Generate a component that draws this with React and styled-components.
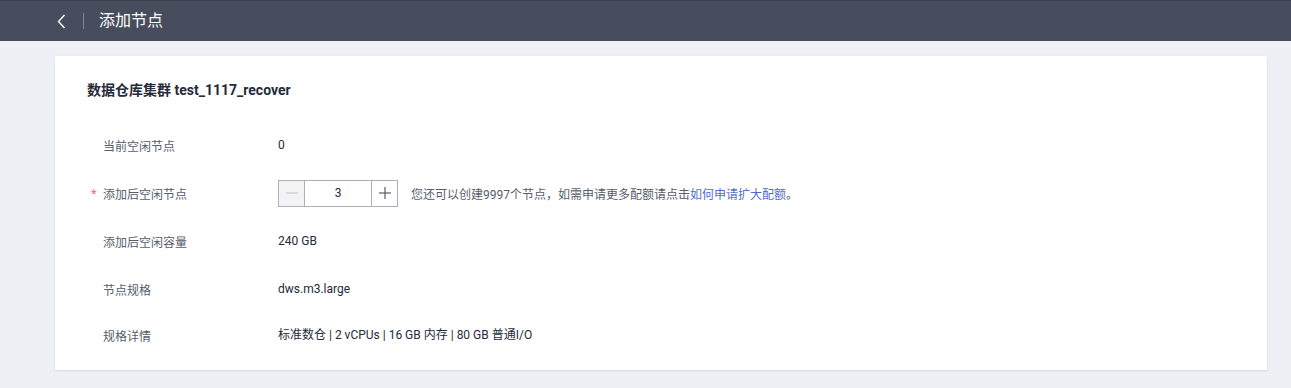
import React from 'react';
import styled, { createGlobalStyle } from 'styled-components';

const GlobalStyle = createGlobalStyle`
  html, body {
    margin: 0;
    padding: 0;
    background: #eef0f5;
    font-family: Roboto, "Noto Sans CJK SC", sans-serif;
  }
`;

const Header = styled.header`
  height: 41px;
  background: #474d5d;
  border-top: 1px solid #393f52;
  display: flex;
  align-items: center;
  padding-left: 57px;
  box-sizing: border-box;
`;

const BackButton = styled.button`
  border: 0;
  background: none;
  padding: 0;
  width: 12px;
  height: 16px;
  display: flex;
  align-items: center;
  cursor: pointer;
`;

const Divider = styled.span`
  width: 1px;
  height: 16px;
  background: #80848f;
  margin: 0 15px 0 14px;
`;

const PageTitle = styled.h1`
  margin: 0;
  font-size: 16px;
  font-weight: 400;
  color: #ffffff;
  line-height: 20px;
`;

const Content = styled.main`
  padding: 15px 24px 18px 55px;
`;

const Card = styled.section`
  background: #ffffff;
  box-shadow: 0 1px 2px rgba(37, 43, 58, 0.12);
  padding: 24px 32px 23px;
`;

const CardTitle = styled.h2`
  margin: 0 0 31px;
  font-size: 14px;
  font-weight: 700;
  color: #252b3a;
  line-height: 20px;
`;

const Rows = styled.div`
  display: flex;
  flex-direction: column;
  gap: 20px;
`;

const Row = styled.div`
  display: flex;
  align-items: center;
  min-height: 28px;
  font-size: 12px;
  margin-top: ${p => p.$pull || 0}px;
`;

const Label = styled.div`
  width: 191px;
  padding-left: 16px;
  box-sizing: border-box;
  color: #575d6c;
  display: flex;
  align-items: center;
  transform: translateY(${p => p.$shift || 0}px);
`;

const Required = styled.span`
  width: 12px;
  margin-left: -12px;
  color: #f66f6a;
  font-size: 13px;
`;

const Value = styled.div`
  color: #252b3a;
`;

const Stepper = styled.div`
  display: flex;
  height: 27px;
  border: 1px solid #adb0b8;
  box-sizing: border-box;
  width: 120px;
`;

const StepButton = styled.button`
  width: 26px;
  border: 0;
  padding: 0;
  background: ${p => (p.disabled ? '#f3f3f5' : '#ffffff')};
  display: flex;
  align-items: center;
  justify-content: center;
  cursor: ${p => (p.disabled ? 'not-allowed' : 'pointer')};
`;

const StepInput = styled.input`
  width: 66px;
  border: 0;
  border-left: 1px solid #adb0b8;
  border-right: 1px solid #adb0b8;
  text-align: center;
  font: 12px Roboto, "Noto Sans CJK SC", sans-serif;
  color: #252b3a;
  padding: 0;
  outline: none;
`;

const Hint = styled.span`
  margin-left: 13px;
  color: #575d6c;
`;

const HintLink = styled.a`
  color: #526ecc;
  text-decoration: none;
`;

const Sign = ({ plus, color }) => (
  <svg width="14" height="14" viewBox="0 0 14 14">
    <line x1="1" y1="7" x2="13" y2="7" stroke={color} strokeWidth="1.2" />
    {plus && <line x1="7" y1="1" x2="7" y2="13" stroke={color} strokeWidth="1.2" />}
  </svg>
);

const info = [
  { label: '添加后空闲容量', value: '240 GB' },
  { label: '节点规格', value: 'dws.m3.large' },
  { label: '规格详情', value: '标准数仓 | 2 vCPUs | 16 GB 内存 | 80 GB 普通I/O', shift: 2, pull: -4 },
];

export default function App() {
  return (
    <>
      <GlobalStyle />
      <Header>
        <BackButton aria-label="back">
          <svg width="9" height="15" viewBox="0 0 9 15">
            <path d="M7.5 1 L1.5 7.5 L7.5 14" fill="none" stroke="#ffffff" strokeWidth="1.4" />
          </svg>
        </BackButton>
        <Divider />
        <PageTitle>添加节点</PageTitle>
      </Header>
      <Content>
        <Card>
          <CardTitle>数据仓库集群 test_1117_recover</CardTitle>
          <Rows>
            <Row>
              <Label>当前空闲节点</Label>
              <Value>0</Value>
            </Row>
            <Row>
              <Label>
                <Required>*</Required>添加后空闲节点
              </Label>
              <Stepper>
                <StepButton disabled>
                  <Sign color="#c8cad0" />
                </StepButton>
                <StepInput defaultValue="3" />
                <StepButton>
                  <Sign plus color="#575d6c" />
                </StepButton>
              </Stepper>
              <Hint>
                您还可以创建9997个节点，如需申请更多配额请点击
                <HintLink href="#">如何申请扩大配额</HintLink>。
              </Hint>
            </Row>
            {info.map(item => (
              <Row key={item.label} $pull={item.pull}>
                <Label $shift={item.shift}>{item.label}</Label>
                <Value>{item.value}</Value>
              </Row>
            ))}
          </Rows>
        </Card>
      </Content>
    </>
  );
}
